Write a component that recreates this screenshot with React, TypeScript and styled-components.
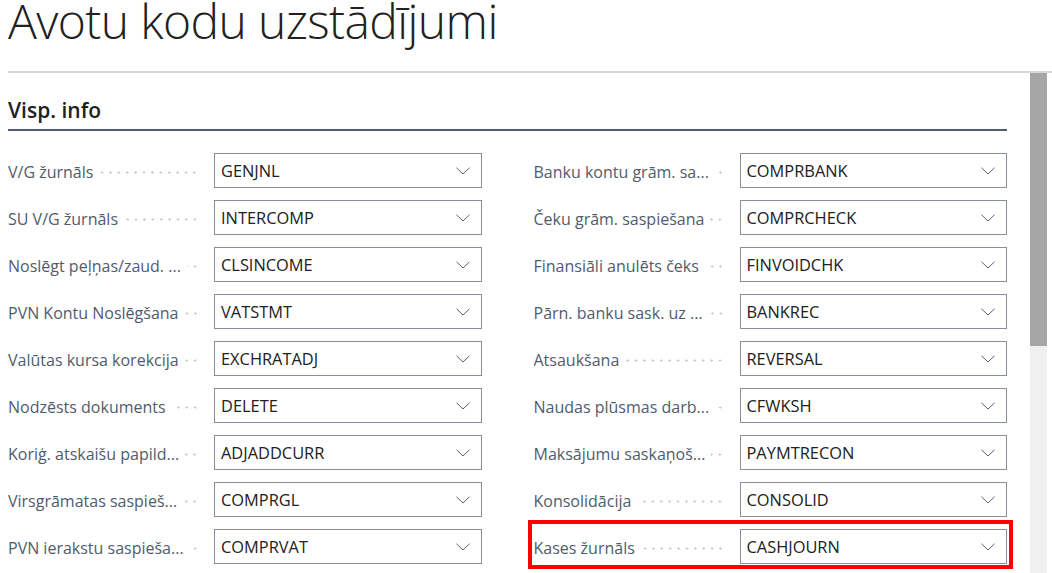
import React from "react";
import styled, { createGlobalStyle } from "styled-components";

const GlobalStyle = createGlobalStyle`
  html, body { margin: 0; padding: 0; background: #ffffff; }
  body { font-family: "Open Sans", "Noto Sans", sans-serif; overflow: hidden; }
  * { box-sizing: border-box; }
`;

const Page = styled.div`
  width: 1052px;
  height: 573px;
  padding-left: 8px;
  overflow: hidden;
`;

const Header = styled.header`
  height: 73px;
  border-bottom: 2px solid #d5d9de;
`;

const Title = styled.h1`
  margin: 0;
  font-family: "Open Sans", sans-serif;
  font-weight: 300;
  font-size: 48px;
  line-height: 42px;
  color: #212121;
  letter-spacing: -0.6px;
`;

const Body = styled.div`
  display: flex;
  height: 500px;
`;

const Content = styled.main`
  flex: 0 0 999px;
`;

const SectionTitle = styled.h2`
  margin: 0;
  padding: 23px 0 5px;
  font-size: 21px;
  line-height: 28px;
  font-weight: 600;
  color: #212121;
  border-bottom: 2px solid #505c6d;
`;

const Grid = styled.div`
  margin-top: 22px;
  display: grid;
  grid-template-columns: 1fr 1fr;
  column-gap: 52px;
  row-gap: 12px;
`;

const Field = styled.div<{ $highlight?: boolean }>`
  position: relative;
  display: grid;
  grid-template-columns: 206px 1fr;
  height: 35px;
  ${(p) =>
    p.$highlight &&
    `
    &::after {
      content: "";
      position: absolute;
      top: -9px;
      bottom: -5px;
      left: -6px;
      right: -6px;
      border: 4px solid #ff0000;
      pointer-events: none;
    }
  `}
`;

const Label = styled.div`
  display: flex;
  align-items: center;
  min-width: 0;
  padding-top: 2px;
`;

const LabelText = styled.span`
  font-size: 16px;
  color: #505c6d;
  white-space: nowrap;
  overflow: hidden;
`;

const Leader = styled.span`
  flex: 1 0 9px;
  height: 3px;
  margin: 2px 15px 0 6px;
  background-image: radial-gradient(circle, #c4c4c4 0.9px, transparent 1.2px);
  background-size: 8.4px 3px;
  background-repeat: repeat-x;
  background-position: right center;
`;

const Select = styled.div`
  display: flex;
  align-items: center;
  justify-content: space-between;
  height: 35px;
  border: 1px solid #8a9099;
  padding: 0 11px 0 6px;
  font-size: 16.4px;
  color: #212121;
  background: #ffffff;
`;

const Chevron = styled.svg`
  width: 14px;
  height: 8px;
  flex: none;
`;

const ScrollTrack = styled.div`
  margin-left: auto;
  margin-right: 5px;
  width: 17px;
  height: 100%;
  background: #f0f0f0;
`;

const ScrollThumb = styled.div`
  height: 273px;
  background: #a6a6a6;
`;

type Item = { label: string; value: string; highlight?: boolean };

const left: Item[] = [
  { label: "V/G žurnāls", value: "GENJNL" },
  { label: "SU V/G žurnāls", value: "INTERCOMP" },
  { label: "Noslēgt peļņas/zaud. ...", value: "CLSINCOME" },
  { label: "PVN Kontu Noslēgšana", value: "VATSTMT" },
  { label: "Valūtas kursa korekcija", value: "EXCHRATADJ" },
  { label: "Nodzēsts dokuments", value: "DELETE" },
  { label: "Koriģ. atskaišu papild...", value: "ADJADDCURR" },
  { label: "Virsgrāmatas saspieš...", value: "COMPRGL" },
  { label: "PVN ierakstu saspieša...", value: "COMPRVAT" },
];

const right: Item[] = [
  { label: "Banku kontu grām. sa...", value: "COMPRBANK" },
  { label: "Čeku grām. saspiešana", value: "COMPRCHECK" },
  { label: "Finansiāli anulēts čeks", value: "FINVOIDCHK" },
  { label: "Pārn. banku sask. uz ...", value: "BANKREC" },
  { label: "Atsaukšana", value: "REVERSAL" },
  { label: "Naudas plūsmas darb...", value: "CFWKSH" },
  { label: "Maksājumu saskaņoš...", value: "PAYMTRECON" },
  { label: "Konsolidācija", value: "CONSOLID" },
  { label: "Kases žurnāls", value: "CASHJOURN", highlight: true },
];

const FieldRow = ({ item }: { item: Item }) => (
  <Field $highlight={item.highlight}>
    <Label>
      <LabelText>{item.label}</LabelText>
      <Leader />
    </Label>
    <Select>
      <span>{item.value}</span>
      <Chevron viewBox="0 0 14 8">
        <path d="M0.5 0.8 L7 7 L13.5 0.8" fill="none" stroke="#606060" strokeWidth="1" />
      </Chevron>
    </Select>
  </Field>
);

export default function App() {
  const rows = left.map((l, i) => [l, right[i]]).flat();
  return (
    <>
      <GlobalStyle />
      <Page>
        <Header>
          <Title>Avotu kodu uzstādījumi</Title>
        </Header>
        <Body>
          <Content>
            <SectionTitle>Visp. info</SectionTitle>
            <Grid>
              {rows.map((item, i) => (
                <FieldRow key={i} item={item} />
              ))}
            </Grid>
          </Content>
          <ScrollTrack>
            <ScrollThumb />
          </ScrollTrack>
        </Body>
      </Page>
    </>
  );
}
